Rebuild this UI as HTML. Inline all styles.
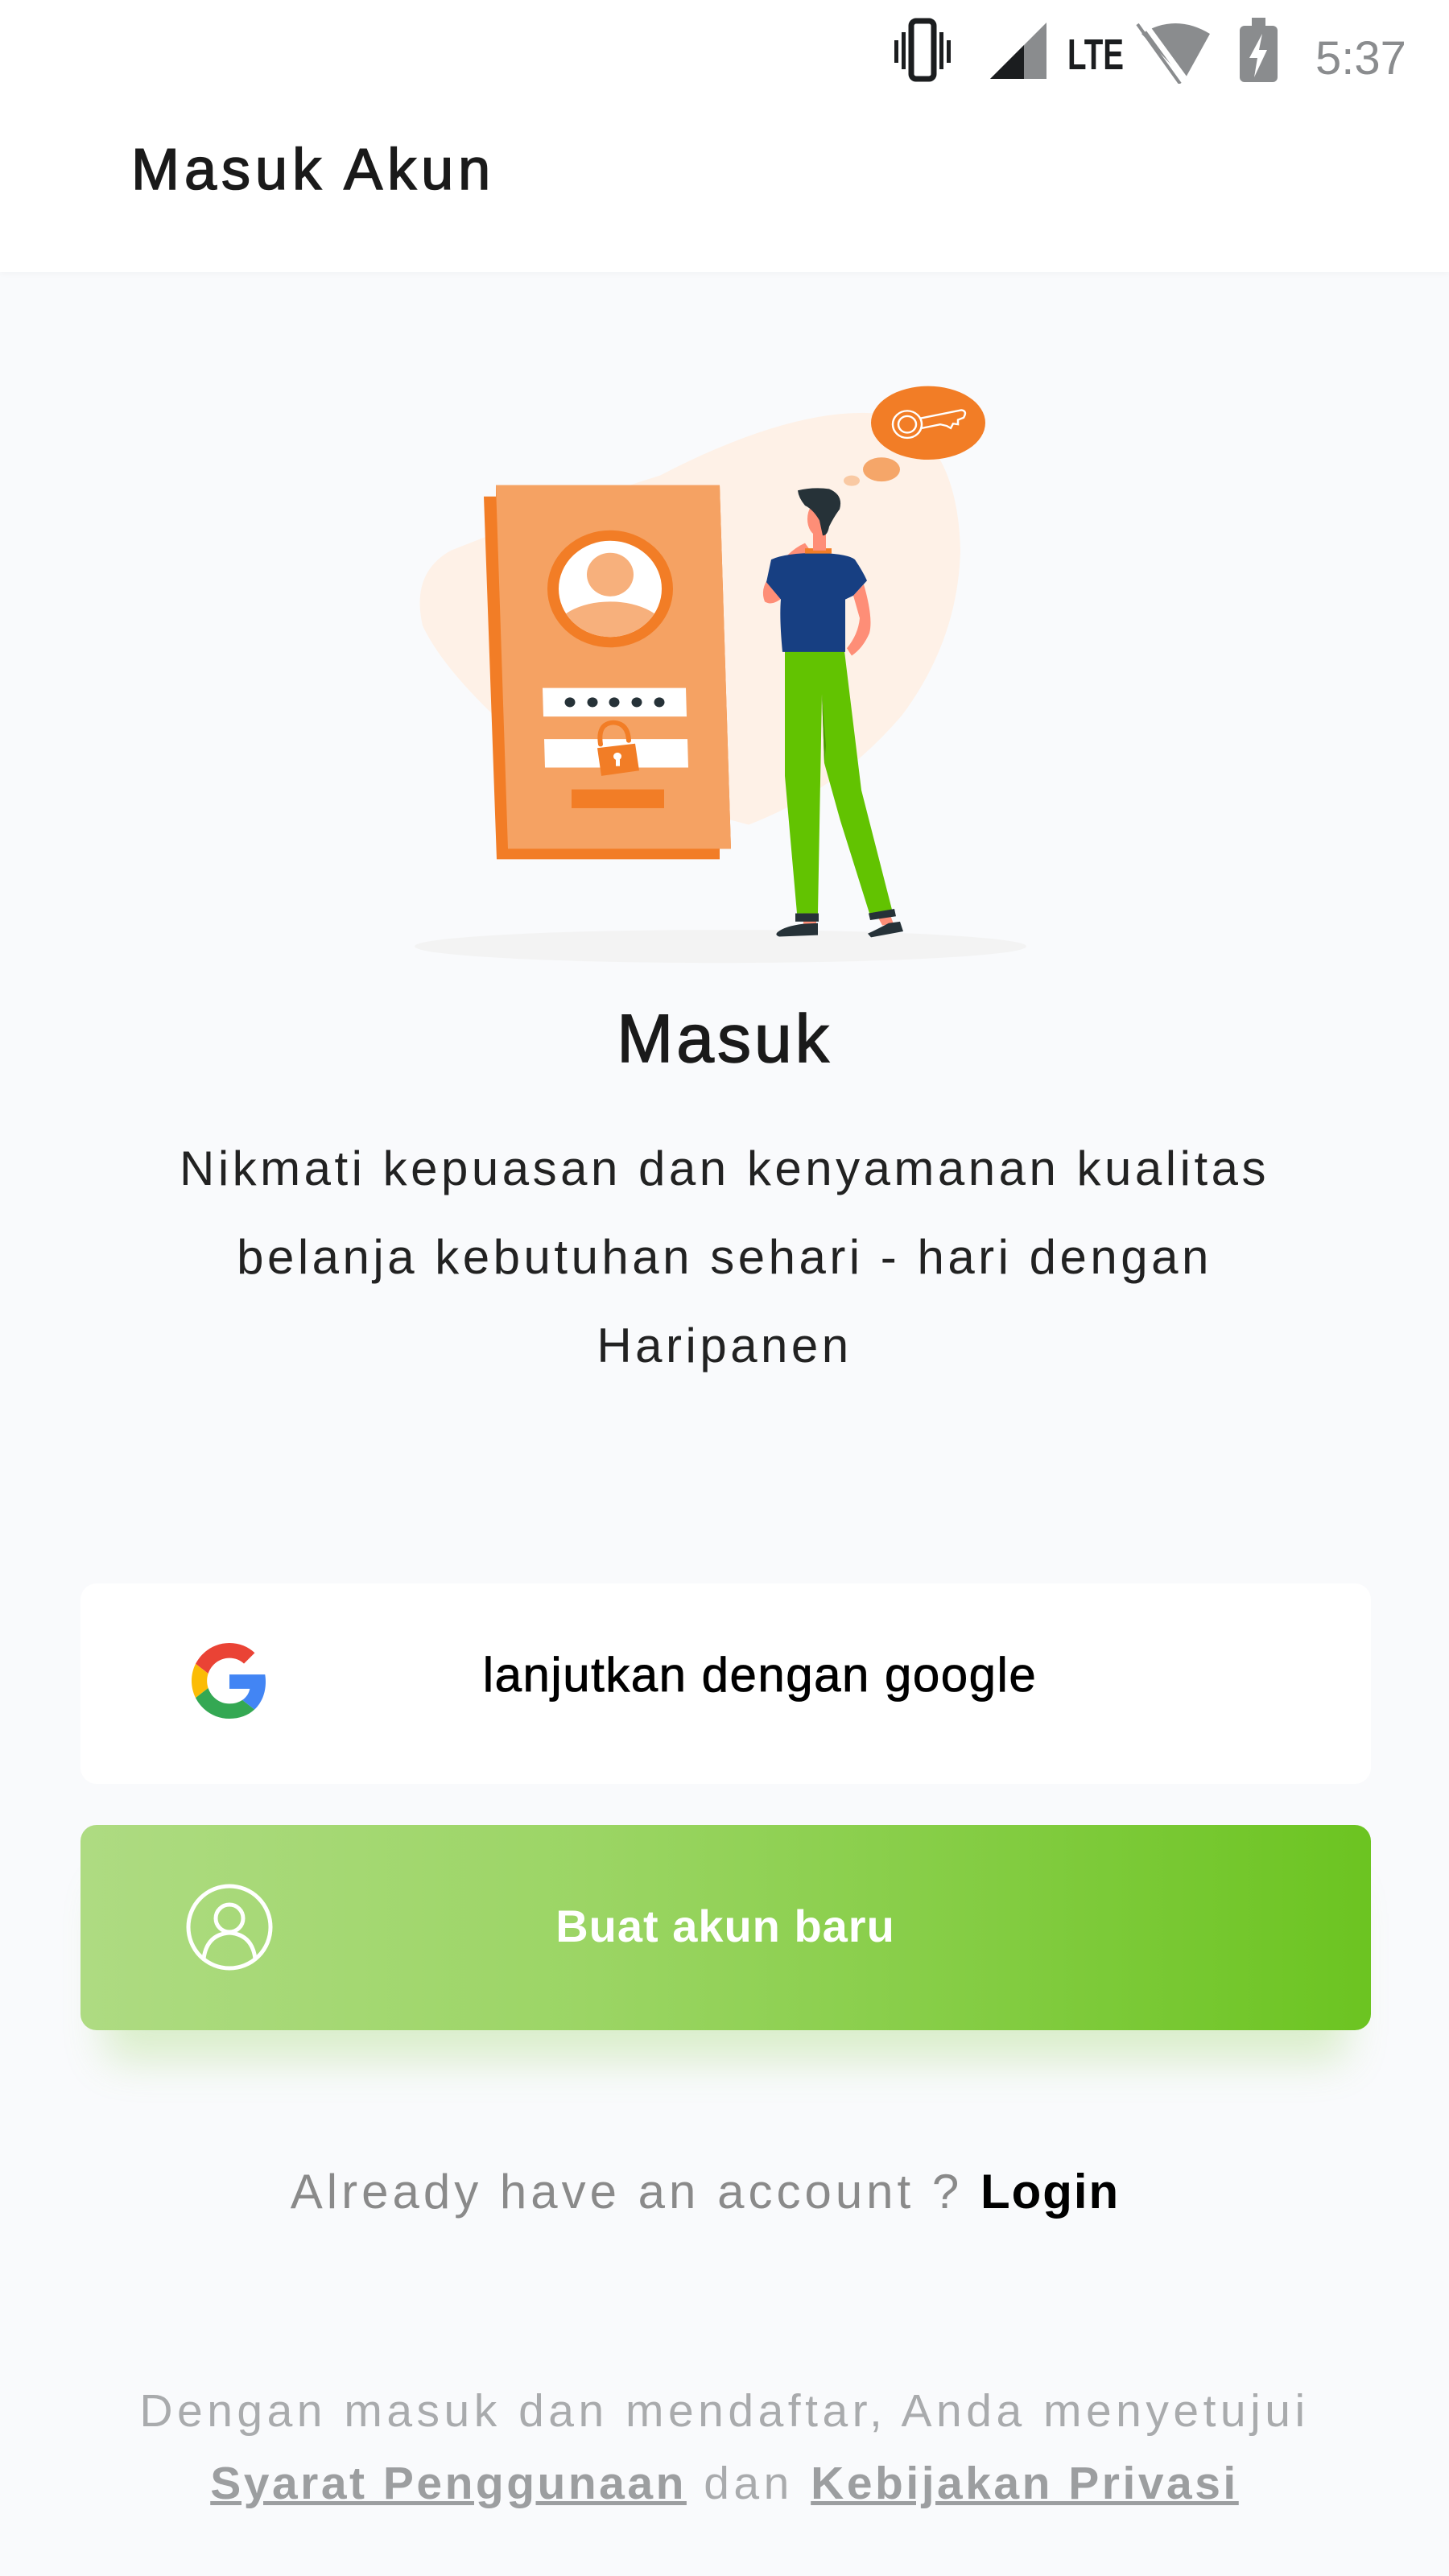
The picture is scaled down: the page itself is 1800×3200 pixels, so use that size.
<!DOCTYPE html>
<html><head><meta charset="utf-8"><style>
*{margin:0;padding:0;box-sizing:border-box}
body{width:1800px;height:3200px;background:#f9fafc;font-family:"Liberation Sans",sans-serif;position:relative;overflow:hidden}
.abs{position:absolute}
.hdr{left:0;top:0;width:1800px;height:338px;background:#fff;box-shadow:0 2px 8px rgba(0,0,0,0.03)}
.title{left:163px;top:170px;font-size:72px;color:#1a1a1a;letter-spacing:6px;-webkit-text-stroke:1.6px #1a1a1a}
.c{left:0;width:1800px;text-align:center}
</style></head><body>
<div class="abs hdr"></div>
<!-- status bar -->
<svg class="abs" style="left:1100px;top:18px" width="660" height="86" viewBox="0 0 660 86">
 <rect x="11" y="32" width="5" height="28" fill="#1b1d1f"/><rect x="20" y="22" width="5" height="46" fill="#1b1d1f"/>
 <rect x="32" y="8" width="28" height="72" rx="6" fill="none" stroke="#1b1d1f" stroke-width="7"/>
 <rect x="67" y="22" width="5" height="46" fill="#1b1d1f"/><rect x="76" y="32" width="5" height="28" fill="#1b1d1f"/>
 <polygon points="200,10 200,80 130,80" fill="#8a8c8e"/><polygon points="172,38 172,80 130,80" fill="#1b1d1f"/>
 <text x="226" y="68" font-family="Liberation Sans" font-weight="bold" font-size="54" fill="#1b1d1f" textLength="70" lengthAdjust="spacingAndGlyphs">LTE</text>
 <path d="M318 24 Q360 -2 403 24 L372 80 Z" fill="#8a8c8e"/><line x1="318" y1="6" x2="372" y2="80" stroke="#fff" stroke-width="7"/><line x1="313" y1="12" x2="366" y2="86" stroke="#8a8c8e" stroke-width="4"/>
 <rect x="440" y="14" width="47" height="70" rx="6" fill="#8a8c8e"/><rect x="455" y="4" width="17" height="12" fill="#8a8c8e"/>
 <polygon points="468,24 452,54 462,54 458,78 474,44 464,44" fill="#fff"/>
 <text x="534" y="74" font-family="Liberation Sans" font-size="58" fill="#8a8c8e">5:37</text>
</svg>
<div class="abs title">Masuk Akun</div>

<!-- illustration -->
<svg class="abs" style="left:0;top:0" width="1800" height="1300" viewBox="0 0 1800 1300">
<g transform="translate(0 460) scale(1 0.933) translate(0 -460)">
 <ellipse cx="895" cy="1227" rx="380" ry="22" fill="#f3f3f3"/>
 <path d="M560 700 Q700 640 820 600 Q1000 500 1110 520 Q1190 560 1193 700 Q1190 820 1120 920 Q1040 1020 930 1065 L700 1000 Q560 880 525 800 Q510 730 560 700Z" fill="#fef1e7"/>
 <polygon points="601,628 616,628 616,613 894,613 908,1097 894,1097 894,1111 617,1111" fill="#f27d26"/>
 <polygon points="616,613 894,613 908,1097 631,1097" fill="#f5a263"/>
 <circle cx="758" cy="751" r="71" fill="#fff" stroke="#f27d26" stroke-width="14"/>
 <clipPath id="cc"><circle cx="758" cy="751" r="64"/></clipPath>
 <g clip-path="url(#cc)"><circle cx="758" cy="732" r="29" fill="#f7b07c"/><ellipse cx="758" cy="810" rx="70" ry="42" fill="#f7b07c"/></g>
 <polygon points="674,883 852,883 853,921 675,921" fill="#fff"/>
 <g fill="#263238"><circle cx="708" cy="902" r="6.5"/><circle cx="736" cy="902" r="6.5"/><circle cx="763" cy="902" r="6.5"/><circle cx="791" cy="902" r="6.5"/><circle cx="819" cy="902" r="6.5"/></g>
 <polygon points="676,951 854,951 855,989 677,989" fill="#fff"/>
 <path d="M746 958 Q742 930 762 929 Q780 930 781 953" fill="none" stroke="#f27d26" stroke-width="6" stroke-linecap="round"/>
 <polygon points="742,963 789,957 794,993 747,1000" fill="#f27d26"/>
 <circle cx="767" cy="974" r="5" fill="#fff"/><rect x="765" y="975" width="5" height="12" fill="#fff"/>
 <rect x="710" y="1018" width="115" height="25" fill="#f27d26"/>
 <ellipse cx="1153" cy="530" rx="71" ry="49" fill="#f27d26"/>
 <g fill="none" stroke="#fff" stroke-width="2.5"><circle cx="1127" cy="532" r="18"/><circle cx="1127" cy="532" r="11"/><path d="M1143 524 L1194 513 Q1202 514 1197 523 L1190 526 L1190 532 L1184 531 L1181 537 L1176 534 L1168 532 L1145 537"/></g>
 <ellipse cx="1095" cy="592" rx="23" ry="16" fill="#f5a669"/>
 <ellipse cx="1058" cy="607" rx="10" ry="7" fill="#f9c9a3"/>
 <!-- person -->
 <rect x="998" y="1183" width="16" height="14" fill="#fe8e77"/>
 <polygon points="1088,1183 1104,1180 1110,1197 1096,1199" fill="#fe8e77"/>
 <path d="M966 1208 Q975 1200 998 1197 L1016 1196 L1016 1212 L968 1214 Q962 1212 966 1208Z" fill="#263238"/>
 <path d="M1078 1210 Q1090 1204 1104 1196 L1118 1194 L1122 1207 L1082 1215Z" fill="#263238"/>
 <polygon points="975,834 1049,834 1070,1019 1108,1178 1080,1183 1044,1060 1024,983 1021,891 1016,1183 990,1183 975,1000" fill="#62c301"/>
 <path d="M1021 891 L1026 960 L1024 983 Z" fill="#4a9a00"/>
 <rect x="988" y="1183" width="29" height="11" fill="#263238"/>
 <polygon points="1079,1183 1111,1177 1113,1187 1081,1192" fill="#263238"/>
 <path d="M1073 745 Q1085 790 1080 810 Q1072 830 1058 840 L1052 830 Q1066 812 1068 790 L1060 760Z" fill="#fe8e77"/>
 <path d="M955 736 Q978 700 1000 690 L1010 705 Q985 730 975 760 Q960 775 950 768 Q944 752 955 736Z" fill="#fe8e77"/>
 <path d="M958 712 Q975 703 1020 703 Q1055 705 1062 712 Q1072 728 1077 740 L1060 760 L1050 765 L1050 835 L972 835 Q968 790 970 765 L952 742 Z" fill="#173f82"/>
 <path d="M1000 697 L1033 697 L1033 704 L1000 704Z" fill="#f27d26"/>
 <ellipse cx="1016" cy="658" rx="13" ry="22" fill="#fe8e77"/>
 <rect x="1010" y="670" width="16" height="30" fill="#fe8e77"/>
 <path d="M991 620 Q1010 615 1030 618 Q1048 626 1043 645 Q1036 655 1030 668 Q1028 680 1022 680 L1018 660 Q1010 645 1000 640 Q992 630 991 620Z" fill="#263238"/>
</g>
</svg>

<div class="abs c" style="top:1242px;font-size:84px;color:#1a1a1a;letter-spacing:4px;-webkit-text-stroke:1.5px #1a1a1a">Masuk</div>
<div class="abs c" style="top:1397px;font-size:60px;line-height:110px;color:#222;letter-spacing:4.5px">Nikmati kepuasan dan kenyamanan kualitas<br>belanja kebutuhan sehari - hari dengan<br>Haripanen</div>

<!-- google button -->
<div class="abs" style="left:100px;top:1967px;width:1603px;height:249px;background:#fff;border-radius:20px"></div>
<svg class="abs" style="left:238px;top:2041px" width="94" height="94" viewBox="0 0 48 48">
 <path fill="#EA4335" d="M24 9.5c3.54 0 6.71 1.22 9.21 3.6l6.850-6.85C35.9 2.38 30.47 0 24 0 14.62 0 6.51 5.38 2.56 13.22l7.98 6.19C12.43 13.72 17.74 9.5 24 9.5z"/>
 <path fill="#4285F4" d="M46.98 24.55c0-1.570-.15-3.090-.38-4.55H24v9.02h12.94c-.58 2.96-2.26 5.48-4.78 7.18l7.73 6c4.51-4.18 7.09-10.36 7.09-17.65z"/>
 <path fill="#FBBC05" d="M10.53 28.59c-.48-1.45-.76-2.99-.76-4.59s.27-3.14.76-4.59l-7.98-6.19C.92 16.46 0 20.12 0 24c0 3.88.92 7.54 2.56 10.78l7.97-6.19z"/>
 <path fill="#34A853" d="M24 48c6.48 0 11.93-2.13 15.890-5.81l-7.73-6c-2.15 1.45-4.92 2.3-8.16 2.3-6.26 0-11.57-4.22-13.470-9.91l-7.98 6.19C6.51 42.62 14.62 48 24 48z"/>
</svg>
<div class="abs" style="left:500px;top:2046px;width:888px;text-align:center;font-size:60px;color:#000;letter-spacing:1.5px;-webkit-text-stroke:0.8px #000">lanjutkan dengan google</div>

<!-- green button -->
<div class="abs" style="left:130px;top:2300px;width:1543px;height:215px;border-radius:20px;box-shadow:0 45px 50px rgba(140,210,80,0.28)"></div>
<div class="abs" style="left:100px;top:2267px;width:1603px;height:255px;border-radius:20px;background:linear-gradient(90deg,#aedb82,#9bd564 40%,#6cc421)"></div>
<svg class="abs" style="left:230px;top:2339px" width="110" height="110" viewBox="0 0 110 110">
 <circle cx="55" cy="55" r="51" fill="none" stroke="#fff" stroke-width="5"/>
 <circle cx="55" cy="44" r="17" fill="none" stroke="#fff" stroke-width="5"/>
 <path d="M23 94 Q27 64 55 62 Q83 64 87 94" fill="none" stroke="#fff" stroke-width="5"/>
</svg>
<div class="abs" style="left:500px;top:2360px;width:802px;text-align:center;font-size:56px;font-weight:bold;color:#fff;letter-spacing:1px">Buat akun baru</div>

<div class="abs c" style="left:-24px;top:2688px;font-size:60px;color:#8a8a8a;letter-spacing:5px">Already have an account ? <span style="color:#000;font-weight:bold;letter-spacing:2px">Login</span></div>

<div class="abs c" style="top:2950px;font-size:57px;line-height:90px;color:#a9abad;letter-spacing:5.5px">Dengan masuk dan mendaftar, Anda menyetujui<br><b style="text-decoration:underline;color:#9c9ea0;letter-spacing:3.5px">Syarat Penggunaan</b> dan <b style="text-decoration:underline;color:#9c9ea0;letter-spacing:3.5px">Kebijakan Privasi</b></div>
</body></html>
